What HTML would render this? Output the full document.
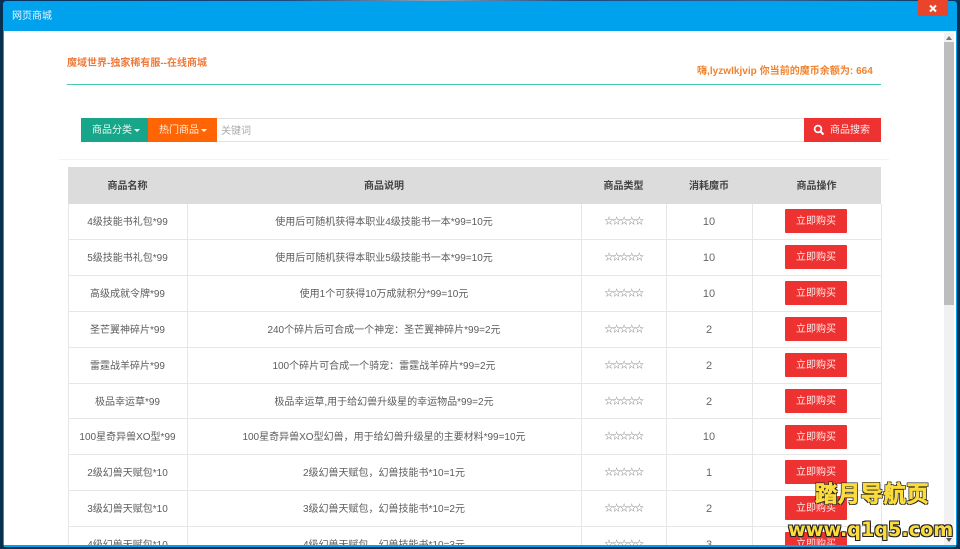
<!DOCTYPE html>
<html><head><meta charset="utf-8"><style>
html,body{margin:0;padding:0;width:960px;height:549px;overflow:hidden;background:#06304f}
body{position:relative;font-family:"Liberation Sans","Noto Sans CJK SC",sans-serif;font-size:10px;color:#5c5c5c;filter:blur(.3px)}
.a{position:absolute;white-space:nowrap}
#topbg{left:0;top:0;width:960px;height:2px;background:linear-gradient(90deg,#06305a,#1a4a80 30%,#8aa0b8 45%,#1a4a80 60%,#305f8f 80%,#0a3560)}
#win{left:3px;top:1px;width:954px;height:546px;background:#00a2ed;border-radius:3px}
#content{left:4px;top:31px;width:952px;height:514px;background:#fff;overflow:hidden}
#title{left:12px;top:10px;font-size:10px;line-height:14px;color:#e8f6fd}
#close{left:918px;top:0;width:30px;height:16px;background:#e8452a}
#sb{left:944px;top:33px;width:10px;height:512px;background:#f1f1f1}
#thumb{left:0;top:9px;width:10px;height:263px;background:#bdbdbd}
.t{position:absolute;text-align:center;white-space:nowrap;line-height:14px;font-size:10px}
.h{color:#444;font-weight:bold;font-size:10px}
.n{font-size:11px;color:#666;margin-top:1px}
.line{position:absolute;background:#e6e6e6}
.btn{position:absolute;left:785px;width:62px;height:24px;background:#ee3232;border-radius:1px;color:#ffe9e9;font-size:10px;line-height:26px;text-align:center}
.stars{letter-spacing:-1.4px;font-size:9px;color:#777}
#wm1{left:815px;top:480px;font-size:22.5px;line-height:30px;font-weight:bold;color:#fbdc3c;letter-spacing:.3px;-webkit-text-stroke:.7px #fbdc3c;text-shadow:1px 1px 0 #222,-1px -1px 0 #222,1px -1px 0 #222,-1px 1px 0 #222}
#wm2{left:788px;top:518px;font-size:19.2px;line-height:24px;font-weight:bold;color:#fbdc3c;font-family:"DejaVu Sans","Liberation Sans",sans-serif;text-shadow:1px 1px 0 #222,-1px -1px 0 #222,1px -1px 0 #222,-1px 1px 0 #222}
</style></head><body>
<div class="a" id="topbg"></div>
<div class="a" id="win"></div>
<div class="a" id="content"></div>
<div class="a" id="title">网页商城</div>
<div class="a" id="close"><svg width="30" height="16" style="display:block"><path d="M12 5.5l6 6M18 5.5l-6 6" stroke="#fff" stroke-width="2"/></svg></div>

<div class="a" style="left:67px;top:57px;font-size:10px;line-height:14px;font-weight:bold;color:#f0793a">魔域世界-独家稀有服--在线商城</div>
<div class="a" style="left:697px;top:65px;font-size:10px;line-height:14px;font-weight:bold;color:#f0822e;letter-spacing:.03px">嗨,lyzwlkjvip 你当前的魔币余额为: 664</div>
<div class="a" style="left:67px;top:84px;width:814px;height:1px;background:#48c9b0"></div>

<div class="a" style="left:81px;top:118px;width:67px;height:24px;background:#17a689;color:#e8f8f3;font-size:10px;line-height:26px;padding-left:11px;box-sizing:border-box">商品分类<span style="display:inline-block;width:0;height:0;border:3px solid transparent;border-top-color:#fff;border-bottom:0;margin-left:2px;vertical-align:middle"></span></div>
<div class="a" style="left:148px;top:118px;width:69px;height:24px;background:#ff6505;color:#ffeede;font-size:10px;line-height:26px;padding-left:11px;box-sizing:border-box">热门商品<span style="display:inline-block;width:0;height:0;border:3px solid transparent;border-top-color:#fff;border-bottom:0;margin-left:2px;vertical-align:middle"></span></div>
<div class="a" style="left:217px;top:118px;width:587px;height:24px;box-sizing:border-box;border-top:1px solid #e2e2e2;border-bottom:1px solid #e2e2e2;background:#fff;color:#aaa;font-size:10px;line-height:26px;padding-left:4px">关键词</div>
<div class="a" style="left:804px;top:118px;width:77px;height:24px;background:#ee3232;color:#ffe9e9;font-size:10px;line-height:26px;padding-left:26px;box-sizing:border-box">商品搜索</div>
<svg class="a" style="left:813px;top:124px" width="12" height="12"><circle cx="5" cy="5" r="3.4" fill="none" stroke="#fff" stroke-width="1.7"/><path d="M7.5 7.5L10.5 10.5" stroke="#fff" stroke-width="2"/></svg>
<div class="a" style="left:59px;top:159px;width:830px;height:1px;background:#f3f3f3"></div>

<div class="a" style="left:68px;top:167px;width:813px;height:37px;background:#dcdcdc"></div>
<div class="line" style="left:68px;top:204px;width:1px;height:341px"></div>
<div class="line" style="left:187px;top:204px;width:1px;height:341px"></div>
<div class="line" style="left:581px;top:204px;width:1px;height:341px"></div>
<div class="line" style="left:666px;top:204px;width:1px;height:341px"></div>
<div class="line" style="left:752px;top:204px;width:1px;height:341px"></div>
<div class="line" style="left:881px;top:204px;width:1px;height:341px"></div>
<div class="line" style="left:68px;top:239px;width:813px;height:1px"></div>
<div class="line" style="left:68px;top:275px;width:813px;height:1px"></div>
<div class="line" style="left:68px;top:311px;width:813px;height:1px"></div>
<div class="line" style="left:68px;top:347px;width:813px;height:1px"></div>
<div class="line" style="left:68px;top:383px;width:813px;height:1px"></div>
<div class="line" style="left:68px;top:418px;width:813px;height:1px"></div>
<div class="line" style="left:68px;top:454px;width:813px;height:1px"></div>
<div class="line" style="left:68px;top:490px;width:813px;height:1px"></div>
<div class="line" style="left:68px;top:526px;width:813px;height:1px"></div>

<div class="t h" style="left:68px;width:119px;top:180px">商品名称</div>
<div class="t h" style="left:187px;width:394px;top:180px">商品说明</div>
<div class="t h" style="left:581px;width:85px;top:180px">商品类型</div>
<div class="t h" style="left:666px;width:86px;top:180px">消耗魔币</div>
<div class="t h" style="left:752px;width:129px;top:180px">商品操作</div>

<div class="t" style="left:68px;width:119px;top:216px">4级技能书礼包*99</div><div class="t" style="left:187px;width:394px;top:216px">使用后可随机获得本职业4级技能书一本*99=10元</div><div class="t stars" style="left:581px;width:85px;top:214px">☆☆☆☆☆</div><div class="t n" style="left:666px;width:86px;top:214px">10</div><div class="btn" style="top:209px">立即购买</div>
<div class="t" style="left:68px;width:119px;top:252px">5级技能书礼包*99</div><div class="t" style="left:187px;width:394px;top:252px">使用后可随机获得本职业5级技能书一本*99=10元</div><div class="t stars" style="left:581px;width:85px;top:250px">☆☆☆☆☆</div><div class="t n" style="left:666px;width:86px;top:250px">10</div><div class="btn" style="top:245px">立即购买</div>
<div class="t" style="left:68px;width:119px;top:288px">高级成就令牌*99</div><div class="t" style="left:187px;width:394px;top:288px">使用1个可获得10万成就积分*99=10元</div><div class="t stars" style="left:581px;width:85px;top:286px">☆☆☆☆☆</div><div class="t n" style="left:666px;width:86px;top:286px">10</div><div class="btn" style="top:281px">立即购买</div>
<div class="t" style="left:68px;width:119px;top:324px">圣芒翼神碎片*99</div><div class="t" style="left:187px;width:394px;top:324px">240个碎片后可合成一个神宠：圣芒翼神碎片*99=2元</div><div class="t stars" style="left:581px;width:85px;top:322px">☆☆☆☆☆</div><div class="t n" style="left:666px;width:86px;top:322px">2</div><div class="btn" style="top:317px">立即购买</div>
<div class="t" style="left:68px;width:119px;top:360px">雷霆战羊碎片*99</div><div class="t" style="left:187px;width:394px;top:360px">100个碎片可合成一个骑宠：雷霆战羊碎片*99=2元</div><div class="t stars" style="left:581px;width:85px;top:358px">☆☆☆☆☆</div><div class="t n" style="left:666px;width:86px;top:358px">2</div><div class="btn" style="top:353px">立即购买</div>
<div class="t" style="left:68px;width:119px;top:396px">极品幸运草*99</div><div class="t" style="left:187px;width:394px;top:396px">极品幸运草,用于给幻兽升级星的幸运物品*99=2元</div><div class="t stars" style="left:581px;width:85px;top:394px">☆☆☆☆☆</div><div class="t n" style="left:666px;width:86px;top:394px">2</div><div class="btn" style="top:389px">立即购买</div>
<div class="t" style="left:68px;width:119px;top:431px">100星奇异兽XO型*99</div><div class="t" style="left:187px;width:394px;top:431px">100星奇异兽XO型幻兽，用于给幻兽升级星的主要材料*99=10元</div><div class="t stars" style="left:581px;width:85px;top:429px">☆☆☆☆☆</div><div class="t n" style="left:666px;width:86px;top:429px">10</div><div class="btn" style="top:425px">立即购买</div>
<div class="t" style="left:68px;width:119px;top:467px">2级幻兽天赋包*10</div><div class="t" style="left:187px;width:394px;top:467px">2级幻兽天赋包，幻兽技能书*10=1元</div><div class="t stars" style="left:581px;width:85px;top:465px">☆☆☆☆☆</div><div class="t n" style="left:666px;width:86px;top:465px">1</div><div class="btn" style="top:460px">立即购买</div>
<div class="t" style="left:68px;width:119px;top:503px">3级幻兽天赋包*10</div><div class="t" style="left:187px;width:394px;top:503px">3级幻兽天赋包，幻兽技能书*10=2元</div><div class="t stars" style="left:581px;width:85px;top:501px">☆☆☆☆☆</div><div class="t n" style="left:666px;width:86px;top:501px">2</div><div class="btn" style="top:496px">立即购买</div>
<div class="t" style="left:68px;width:119px;top:539px">4级幻兽天赋包*10</div><div class="t" style="left:187px;width:394px;top:539px">4级幻兽天赋包，幻兽技能书*10=3元</div><div class="t stars" style="left:581px;width:85px;top:537px">☆☆☆☆☆</div><div class="t n" style="left:666px;width:86px;top:537px">3</div><div class="btn" style="top:532px">立即购买</div>

<div class="a" style="left:4px;top:545px;width:952px;height:2px;background:#00a2ed"></div>
<div class="a" style="left:0;top:547px;width:960px;height:2px;background:#06304f"></div>

<div class="a" id="sb"><div class="a" id="thumb"></div>
<svg class="a" style="left:2px;top:3px" width="6" height="4"><path d="M0 4L3 0L6 4Z" fill="#777"/></svg>
<svg class="a" style="left:2px;top:505px" width="6" height="4"><path d="M0 0L3 4L6 0Z" fill="#555"/></svg></div>

<div class="a" id="wm1">踏月导航页</div>
<div class="a" id="wm2">www.q1q5.com</div>
</body></html>
